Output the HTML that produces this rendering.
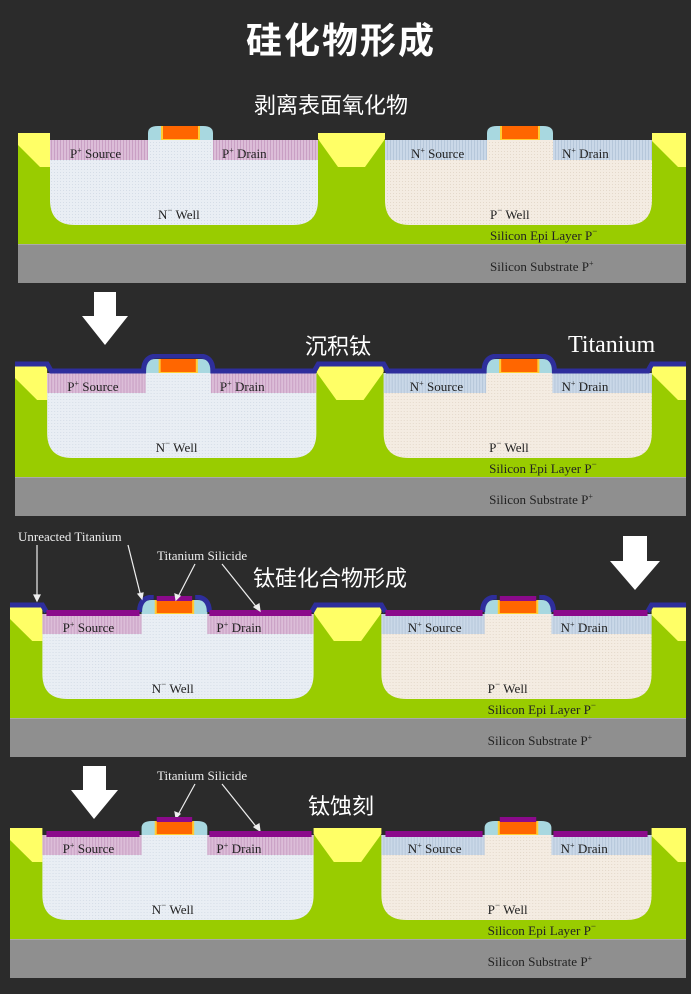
<!DOCTYPE html>
<html><head><meta charset="utf-8"><style>
html,body{margin:0;padding:0;background:#2b2b2b;}
body{width:691px;height:994px;position:relative;overflow:hidden;font-family:"Liberation Sans","Noto Sans CJK SC",sans-serif;}
.h{position:absolute;color:#fff;white-space:nowrap;}
svg.p{position:absolute;}
.t{font-family:"Liberation Serif",serif;font-size:13px;fill:#222;}
.w{font-family:"Liberation Serif",serif;fill:#eee;}
</style></head><body>
<svg width="0" height="0" style="position:absolute">
<defs>
<pattern id="g1" width="3" height="3" patternUnits="userSpaceOnUse"><rect width="3" height="3" fill="#e9eef4"/><rect width="1" height="1" fill="#d5dde7"/></pattern>
<pattern id="g2" width="3" height="3" patternUnits="userSpaceOnUse"><rect width="3" height="3" fill="#f4ece2"/><rect width="1" height="1" fill="#e4d9cb"/></pattern>
<pattern id="pk" width="3" height="3" patternUnits="userSpaceOnUse"><rect width="3" height="3" fill="#dcbdd8"/><rect width="1" height="3" fill="#c9a0c4"/></pattern>
<pattern id="bl" width="3" height="3" patternUnits="userSpaceOnUse"><rect width="3" height="3" fill="#cad8e8"/><rect width="1" height="3" fill="#b6c7da"/></pattern>
<symbol id="base" viewBox="0 -12 668 162">
<rect x="0" y="7" width="668" height="104" fill="#99cc00"/>
<rect x="0" y="111" width="668" height="39" fill="#8f8f8f"/>
<rect x="0" y="111" width="668" height="1" fill="#aaa"/>
<polygon points="0,0 32,0 32,34 22,34 0,12" fill="#ffff66"/>
<polygon points="300,0 367,0 367,6 347,34 320,34 300,6" fill="#ffff66"/>
<polygon points="634,0 668,0 668,34 660,34 634,8" fill="#ffff66"/>
<path d="M32,7 H300 V67 Q300,92 275,92 H57 Q32,92 32,67 Z" fill="url(#g1)"/>
<path d="M367,7 H634 V67 Q634,92 609,92 H392 Q367,92 367,67 Z" fill="url(#g2)"/>
<rect x="32" y="7" width="98" height="20" fill="url(#pk)"/>
<rect x="195" y="7" width="105" height="20" fill="url(#pk)"/>
<rect x="367" y="7" width="102" height="20" fill="url(#bl)"/>
<rect x="535" y="7" width="99" height="20" fill="url(#bl)"/>
<path d="M130,7 V0 Q130,-7 140,-7 H185 Q195,-7 195,0 V7 Z" fill="#a8d8e0"/>
<rect x="143" y="-7" width="39" height="14" fill="#ffcc33"/>
<rect x="145" y="-7" width="35" height="13" fill="#ff6600"/>
<path d="M469,7 V0 Q469,-7 479,-7 H525 Q535,-7 535,0 V7 Z" fill="#a8d8e0"/>
<rect x="482" y="-7" width="40" height="14" fill="#ffcc33"/>
<rect x="484" y="-7" width="36" height="13" fill="#ff6600"/>
</symbol>
</defs></svg>

<div class="h" style="left:246px;top:12px;font-size:36px;font-weight:bold;letter-spacing:2px;">硅化物形成</div>
<div class="h" style="left:254px;top:88px;font-size:22px;">剥离表面氧化物</div>

<svg class="p" style="left:18px;top:121px" width="668" height="162" viewBox="0 -12 668 162" preserveAspectRatio="none">
<use href="#base" x="0" y="-12" width="668" height="162"/>
<text class="t" x="52" y="25">P<tspan font-size="8" dy="-5">+</tspan><tspan dy="5"> Source</tspan></text>
<text class="t" x="204" y="25">P<tspan font-size="8" dy="-5">+</tspan><tspan dy="5"> Drain</tspan></text>
<text class="t" x="393" y="25">N<tspan font-size="8" dy="-5">+</tspan><tspan dy="5"> Source</tspan></text>
<text class="t" x="544" y="25">N<tspan font-size="8" dy="-5">+</tspan><tspan dy="5"> Drain</tspan></text>
<text class="t" x="140" y="86">N<tspan font-size="9" dy="-6">−</tspan><tspan dy="6"> Well</tspan></text>
<text class="t" x="472" y="86">P<tspan font-size="9" dy="-6">−</tspan><tspan dy="6"> Well</tspan></text>
<text class="t" x="472" y="107" font-size="12">Silicon Epi Layer  P<tspan font-size="9" dy="-6">−</tspan></text>
<text class="t" x="472" y="138" font-size="12">Silicon Substrate  P<tspan font-size="8" dy="-5">+</tspan></text>
</svg>

<svg class="p" style="left:80px;top:292px" width="50" height="55"><polygon points="14,0 36,0 36,24 48,24 25,53 2,24 14,24" fill="#fff"/></svg>
<div class="h" style="left:305px;top:329px;font-size:22px;">沉积钛</div>
<div class="h" style="left:568px;top:332px;font-size:24px;font-family:'Liberation Serif',serif;">Titanium</div>

<svg class="p" style="left:15px;top:354px" width="671" height="162" viewBox="0 -12 668 162" preserveAspectRatio="none">
<use href="#base" x="0" y="-12" width="668" height="162"/>
<path d="M0,-2 H32 L36,5 H128 Q128,-10 142,-10 H183 Q197,-10 197,5 H298 L302,-2 H367 L371,5 H467 Q467,-10 481,-10 H523 Q537,-10 537,5 H630 L634,-2 H668" fill="none" stroke="#2e2e9c" stroke-width="5"/>
<text class="t" x="52" y="25">P<tspan font-size="8" dy="-5">+</tspan><tspan dy="5"> Source</tspan></text>
<text class="t" x="204" y="25">P<tspan font-size="8" dy="-5">+</tspan><tspan dy="5"> Drain</tspan></text>
<text class="t" x="393" y="25">N<tspan font-size="8" dy="-5">+</tspan><tspan dy="5"> Source</tspan></text>
<text class="t" x="544" y="25">N<tspan font-size="8" dy="-5">+</tspan><tspan dy="5"> Drain</tspan></text>
<text class="t" x="140" y="86">N<tspan font-size="9" dy="-6">−</tspan><tspan dy="6"> Well</tspan></text>
<text class="t" x="472" y="86">P<tspan font-size="9" dy="-6">−</tspan><tspan dy="6"> Well</tspan></text>
<text class="t" x="472" y="107" font-size="12">Silicon Epi Layer  P<tspan font-size="9" dy="-6">−</tspan></text>
<text class="t" x="472" y="138" font-size="12">Silicon Substrate  P<tspan font-size="8" dy="-5">+</tspan></text>
</svg>

<div class="h" style="left:253px;top:561px;font-size:22px;">钛硅化合物形成</div>
<svg class="p" style="left:608px;top:536px" width="54" height="56"><polygon points="15,0 39,0 39,25 52,25 27,54 2,25 15,25" fill="#fff"/></svg>

<svg class="p" style="left:10px;top:595px" width="676" height="162" viewBox="0 -12 668 162" preserveAspectRatio="none">
<use href="#base" x="0" y="-12" width="668" height="162"/>
<path d="M0,-2 H32 L36,5 M128,5 Q128,-10 142,-10 M183,-10 Q197,-10 197,5 M298,5 L302,-2 H367 L371,5 M467,5 Q467,-10 481,-10 M523,-10 Q537,-10 537,5 M630,5 L634,-2 H668" fill="none" stroke="#2e2e9c" stroke-width="5"/>
<rect x="36" y="3" width="92" height="6" fill="#8b0a8b"/><rect x="197" y="3" width="101" height="6" fill="#8b0a8b"/>
<rect x="371" y="3" width="96" height="6" fill="#8b0a8b"/><rect x="537" y="3" width="93" height="6" fill="#8b0a8b"/>
<rect x="145" y="-11" width="35" height="5" fill="#8b0a8b"/><rect x="484" y="-11" width="36" height="5" fill="#8b0a8b"/>
<text class="t" x="52" y="25">P<tspan font-size="8" dy="-5">+</tspan><tspan dy="5"> Source</tspan></text>
<text class="t" x="204" y="25">P<tspan font-size="8" dy="-5">+</tspan><tspan dy="5"> Drain</tspan></text>
<text class="t" x="393" y="25">N<tspan font-size="8" dy="-5">+</tspan><tspan dy="5"> Source</tspan></text>
<text class="t" x="544" y="25">N<tspan font-size="8" dy="-5">+</tspan><tspan dy="5"> Drain</tspan></text>
<text class="t" x="140" y="86">N<tspan font-size="9" dy="-6">−</tspan><tspan dy="6"> Well</tspan></text>
<text class="t" x="472" y="86">P<tspan font-size="9" dy="-6">−</tspan><tspan dy="6"> Well</tspan></text>
<text class="t" x="472" y="107" font-size="12">Silicon Epi Layer  P<tspan font-size="9" dy="-6">−</tspan></text>
<text class="t" x="472" y="138" font-size="12">Silicon Substrate  P<tspan font-size="8" dy="-5">+</tspan></text>
</svg>

<svg class="p" style="left:0;top:525px" width="300" height="90">
<text class="w" x="18" y="16" font-size="13">Unreacted Titanium</text>
<text class="w" x="157" y="35" font-size="13">Titanium Silicide</text>
<g stroke="#eee" stroke-width="1.2" fill="#eee">
<line x1="37" y1="20" x2="37" y2="74"/><polygon points="34,70 40,70 37,76"/>
<line x1="128" y1="20" x2="141" y2="72"/><polygon points="138,69 143,68 142,74"/>
<line x1="195" y1="39" x2="178" y2="72"/><polygon points="175,69 180,71 176,75"/>
<line x1="222" y1="39" x2="258" y2="84"/><polygon points="254,82 259,79 260,86"/>
</g></svg>

<div class="h" style="left:308px;top:789px;font-size:22px;">钛蚀刻</div>
<svg class="p" style="left:70px;top:766px" width="50" height="55"><polygon points="13,0 36,0 36,24 48,24 24,53 1,24 13,24" fill="#fff"/></svg>
<svg class="p" style="left:0;top:765px" width="300" height="75">
<text class="w" x="157" y="15" font-size="13">Titanium Silicide</text>
<g stroke="#eee" stroke-width="1.2" fill="#eee">
<line x1="195" y1="19" x2="178" y2="50"/><polygon points="175,47 180,49 176,53"/>
<line x1="222" y1="19" x2="258" y2="64"/><polygon points="254,62 259,59 260,66"/>
</g></svg>

<svg class="p" style="left:10px;top:816px" width="676" height="162" viewBox="0 -12 668 162" preserveAspectRatio="none">
<use href="#base" x="0" y="-12" width="668" height="162"/>
<rect x="36" y="3" width="92" height="6" fill="#8b0a8b"/><rect x="197" y="3" width="101" height="6" fill="#8b0a8b"/>
<rect x="371" y="3" width="96" height="6" fill="#8b0a8b"/><rect x="537" y="3" width="93" height="6" fill="#8b0a8b"/>
<rect x="145" y="-11" width="35" height="5" fill="#8b0a8b"/><rect x="484" y="-11" width="36" height="5" fill="#8b0a8b"/>
<text class="t" x="52" y="25">P<tspan font-size="8" dy="-5">+</tspan><tspan dy="5"> Source</tspan></text>
<text class="t" x="204" y="25">P<tspan font-size="8" dy="-5">+</tspan><tspan dy="5"> Drain</tspan></text>
<text class="t" x="393" y="25">N<tspan font-size="8" dy="-5">+</tspan><tspan dy="5"> Source</tspan></text>
<text class="t" x="544" y="25">N<tspan font-size="8" dy="-5">+</tspan><tspan dy="5"> Drain</tspan></text>
<text class="t" x="140" y="86">N<tspan font-size="9" dy="-6">−</tspan><tspan dy="6"> Well</tspan></text>
<text class="t" x="472" y="86">P<tspan font-size="9" dy="-6">−</tspan><tspan dy="6"> Well</tspan></text>
<text class="t" x="472" y="107" font-size="12">Silicon Epi Layer  P<tspan font-size="9" dy="-6">−</tspan></text>
<text class="t" x="472" y="138" font-size="12">Silicon Substrate  P<tspan font-size="8" dy="-5">+</tspan></text>
</svg>
</body></html>
